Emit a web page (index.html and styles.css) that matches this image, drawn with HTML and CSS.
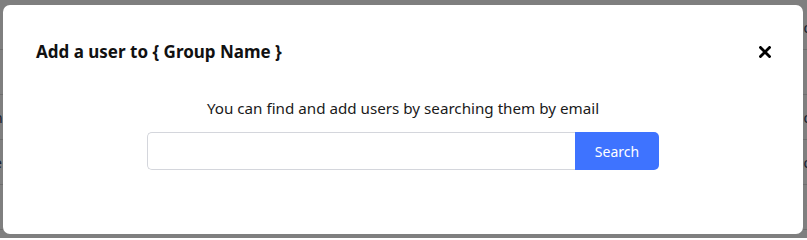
FILE: index.html
```html
<!DOCTYPE html>
<html>
<head>
<meta charset="utf-8">
<link rel="stylesheet" href="styles.css">
</head>
<body>
<div class="page">
  <div class="row"><span class="cell-l">&nbsp;</span><span class="cell-r">o</span></div>
  <div class="row"><span class="cell-l">&nbsp;</span><span class="cell-r">t</span></div>
  <div class="row"><span class="cell-l">n</span><span class="cell-r">o</span></div>
  <div class="row"><span class="cell-l">e</span><span class="cell-r">o</span></div>
  <div class="row"><span class="cell-l">&nbsp;</span><span class="cell-r">t</span></div>
</div>
<div class="backdrop">
  <div class="modal">
    <div class="modal-head">
      <h2 class="title">Add a user to { Group Name }</h2>
      <button class="close" aria-label="Close">
        <svg width="12" height="12" viewBox="0 0 12 12"><path d="M1.5 1.5 L10.5 10.5 M10.5 1.5 L1.5 10.5" stroke="#000" stroke-width="2.8" stroke-linecap="square"/></svg>
      </button>
    </div>
    <div class="modal-body">
      <p class="hint">You can find and add users by searching them by email</p>
      <div class="search">
        <input class="search-input" type="text">
        <button class="search-btn">Search</button>
      </div>
    </div>
  </div>
</div>
</body>
</html>
```
FILE: styles.css
```css
* { box-sizing: border-box; }
html, body { margin: 0; padding: 0; }
body {
  width: 807px;
  height: 238px;
  overflow: hidden;
  background: #fff;
  font-family: "Noto Sans", "Open Sans", sans-serif;
  position: relative;
}
.page { padding-top: 5px; }
.row {
  height: 45px;
  border-bottom: 1px solid #dcdcdc;
  display: flex;
  justify-content: space-between;
  align-items: center;
  font-size: 14px;
  color: #2d3a5a;
}
.cell-l { margin-left: -6px; }
.cell-r { margin-right: -5px; }
.backdrop {
  position: absolute;
  inset: 0;
  background: rgba(0, 0, 0, 0.5);
  padding: 5px 4px 4px 3px;
}
.modal {
  background: #fff;
  border-radius: 7px;
  width: 800px;
  height: 229px;
  padding: 0 33px;
}
.modal-head {
  display: flex;
  justify-content: space-between;
  align-items: center;
  height: 93px;
}
.title {
  margin: 0;
  font-size: 17px;
  font-weight: 700;
  color: #111;
}
.close {
  background: none;
  border: 0;
  padding: 0;
  margin-right: -1px;
  display: flex;
  cursor: pointer;
}
.modal-body {
  display: flex;
  flex-direction: column;
  align-items: center;
}
.hint {
  margin: 0 0 14px;
  font-size: 15.2px;
  color: #1a1a1a;
  line-height: 20px;
}
.search {
  display: flex;
  width: 512px;
  height: 38px;
}
.search-input {
  flex: 1;
  border: 1px solid #d4d6dc;
  border-right: 0;
  border-radius: 5px 0 0 5px;
  font: inherit;
  padding: 0 12px;
  outline: none;
}
.search-btn {
  width: 84px;
  border: 0;
  border-radius: 0 5px 5px 0;
  background: #3e73ff;
  color: #fff;
  font-family: inherit;
  font-size: 14px;
}
```
